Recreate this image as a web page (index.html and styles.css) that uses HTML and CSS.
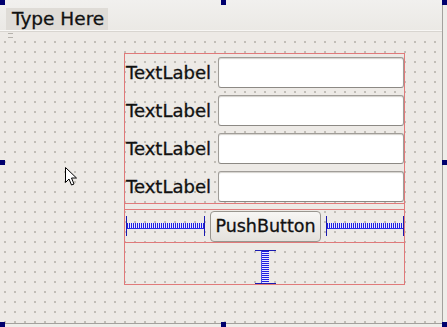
FILE: index.html
```html
<!DOCTYPE html>
<html>
<head>
<meta charset="utf-8">
<link rel="stylesheet" href="styles.css">
</head>
<body>
<div class="form">
  <div class="menubar"><span class="menu-item">Type Here</span></div>
  <div class="toolbar"><span class="grip"></span></div>
  <div class="canvas">
    <div class="vbox">
      <div class="formlayout">
        <div class="row"><span class="label">TextLabel</span><span class="edit"></span></div>
        <div class="row"><span class="label">TextLabel</span><span class="edit"></span></div>
        <div class="row"><span class="label">TextLabel</span><span class="edit"></span></div>
        <div class="row"><span class="label">TextLabel</span><span class="edit"></span></div>
      </div>
      <div class="hbox">
        <div class="hspacer left"><span class="hspring"></span></div>
        <button class="push">PushButton</button>
        <div class="hspacer right"><span class="hspring"></span></div>
      </div>
      <div class="vspace">
        <div class="vspacer"><span class="vspring"></span></div>
      </div>
    </div>
    <svg class="cursor" width="13" height="20" viewBox="0 0 13 20">
      <path d="M0.5 0.5 L0.5 15.5 L4 12 L6.5 18 L9 17 L6.5 11 L11.5 11 Z" fill="#fff" stroke="#000" stroke-width="1" stroke-linejoin="miter"/>
    </svg>
  </div>
</div>
<span class="handle h-tl"></span>
<span class="handle h-tm"></span>
<span class="handle h-tr"></span>
<span class="handle h-ml"></span>
<span class="handle h-mr"></span>
<span class="handle h-bl"></span>
<span class="handle h-bm"></span>
<span class="handle h-br"></span>
</body>
</html>
```

FILE: styles.css
```css
html, body {
  margin: 0;
  padding: 0;
}
body {
  width: 447px;
  height: 327px;
  background: #efede9;
  position: relative;
  overflow: hidden;
  font-family: "DejaVu Sans", Verdana, sans-serif;
}
.form {
  width: 442px;
  height: 323px;
  border-right: 1px solid #a3a19d;
  border-bottom: 1px solid #a3a19d;
  background: #edeae6;
  display: flex;
  flex-direction: column;
}
.menubar {
  height: 31px;
  background: linear-gradient(#f1f0ee, #ebe9e5);
  border-bottom: 1px solid #f8f7f5;
  box-shadow: 0 1px 0 #d8d5d0;
  padding: 8px 0 0 6px;
  box-sizing: border-box;
  display: flex;
  align-items: flex-end;
}
.menu-item {
  display: block;
  height: 22px;
  line-height: 21px;
  padding: 0 4px 0 6px;
  background: #dfdcd7;
  font-size: 18.5px;
  color: #111;
  -webkit-text-stroke: 0.3px #111;
}
.toolbar {
  height: 7px;
  margin-top: 1px;
  padding-left: 8px;
  display: flex;
  align-items: center;
}
.grip {
  display: block;
  width: 5px;
  height: 3px;
  border-top: 1px solid #b5b2ac;
  border-bottom: 1px solid #b5b2ac;
}
.canvas {
  flex: 1;
  position: relative;
  background-image: radial-gradient(circle, #a9a59e 0.6px, transparent 0.9px);
  background-size: 10px 10px;
  background-position: 0px -2px;
}
.vbox {
  position: absolute;
  left: 124px;
  top: 14px;
  width: 281px;
  height: 232px;
  box-sizing: border-box;
  border: 1px solid #e07a7a;
  display: flex;
  flex-direction: column;
}
.formlayout {
  margin: -1px -1px 0 -1px;
  border: 1px solid #e07a7a;
  padding: 3px 0 1px 1px;
  display: flex;
  flex-direction: column;
  gap: 7px;
}
.row {
  display: flex;
  align-items: center;
  height: 31px;
}
.label {
  width: 92px;
  font-size: 18px;
  color: #111;
  white-space: nowrap;
  -webkit-text-stroke: 0.3px #111;
}
.edit {
  display: block;
  width: 186px;
  height: 31px;
  box-sizing: border-box;
  background: #fff;
  border: 1px solid #a09d98;
  border-bottom-color: #8c8984;
  border-radius: 3px;
  box-shadow: inset 0 1px 1px #d4d2ce;
}
.hbox {
  margin: 5px -1px 0 -1px;
  border: 1px solid #e07a7a;
  height: 34px;
  box-sizing: border-box;
  padding: 0 0 0 1px;
  display: flex;
  align-items: center;
}
.hspacer {
  flex: none;
  height: 20px;
  box-sizing: border-box;
  border-left: 1px solid #1a1ab0;
  border-right: 1px solid #1a1ab0;
  display: flex;
  align-items: center;
}
.hspacer.left { width: 79px; }
.hspacer.right { width: 78px; }
.hspring {
  display: block;
  flex: 1;
  height: 5px;
  border-bottom: 1px solid #2a2ae8;
  background: repeating-linear-gradient(90deg, #1f1fe0 0 1px, #e8e8ff 1px 2px);
}
.push {
  margin: 0 5px;
  width: 111px;
  height: 31px;
  box-sizing: border-box;
  border: 1px solid #99968f;
  border-radius: 4px;
  background: linear-gradient(#f7f6f4, #e4e1dc);
  font-family: "DejaVu Sans", Verdana, sans-serif;
  font-size: 17.5px;
  color: #111;
  -webkit-text-stroke: 0.3px #111;
  padding: 0;
}
.vspace {
  flex: 1;
  display: flex;
  justify-content: center;
  align-items: flex-end;
}
.vspacer {
  width: 21px;
  height: 34px;
  box-sizing: border-box;
  border-top: 1px solid #1a1ab0;
  border-bottom: 1px solid #1a1ab0;
  margin-left: 1px;
  margin-bottom: 0;
  display: flex;
  justify-content: center;
}
.vspring {
  display: block;
  width: 7px;
  background: repeating-linear-gradient(180deg, #1f1fe0 0 1px, #e8e8ff 1px 2px);
  border-left: 1px solid #4a4ae8;
}
.cursor {
  position: absolute;
  left: 65px;
  top: 128px;
}
.handle {
  position: absolute;
  width: 5px;
  height: 5px;
  background: #00006e;
}
.h-tl { left: 0; top: 0; }
.h-tm { left: 221px; top: 0; }
.h-tr { left: 442px; top: 0; }
.h-ml { left: 0; top: 160px; }
.h-mr { left: 442px; top: 160px; }
.h-bl { left: 0; top: 322px; }
.h-bm { left: 221px; top: 322px; }
.h-br { left: 442px; top: 322px; }
```
